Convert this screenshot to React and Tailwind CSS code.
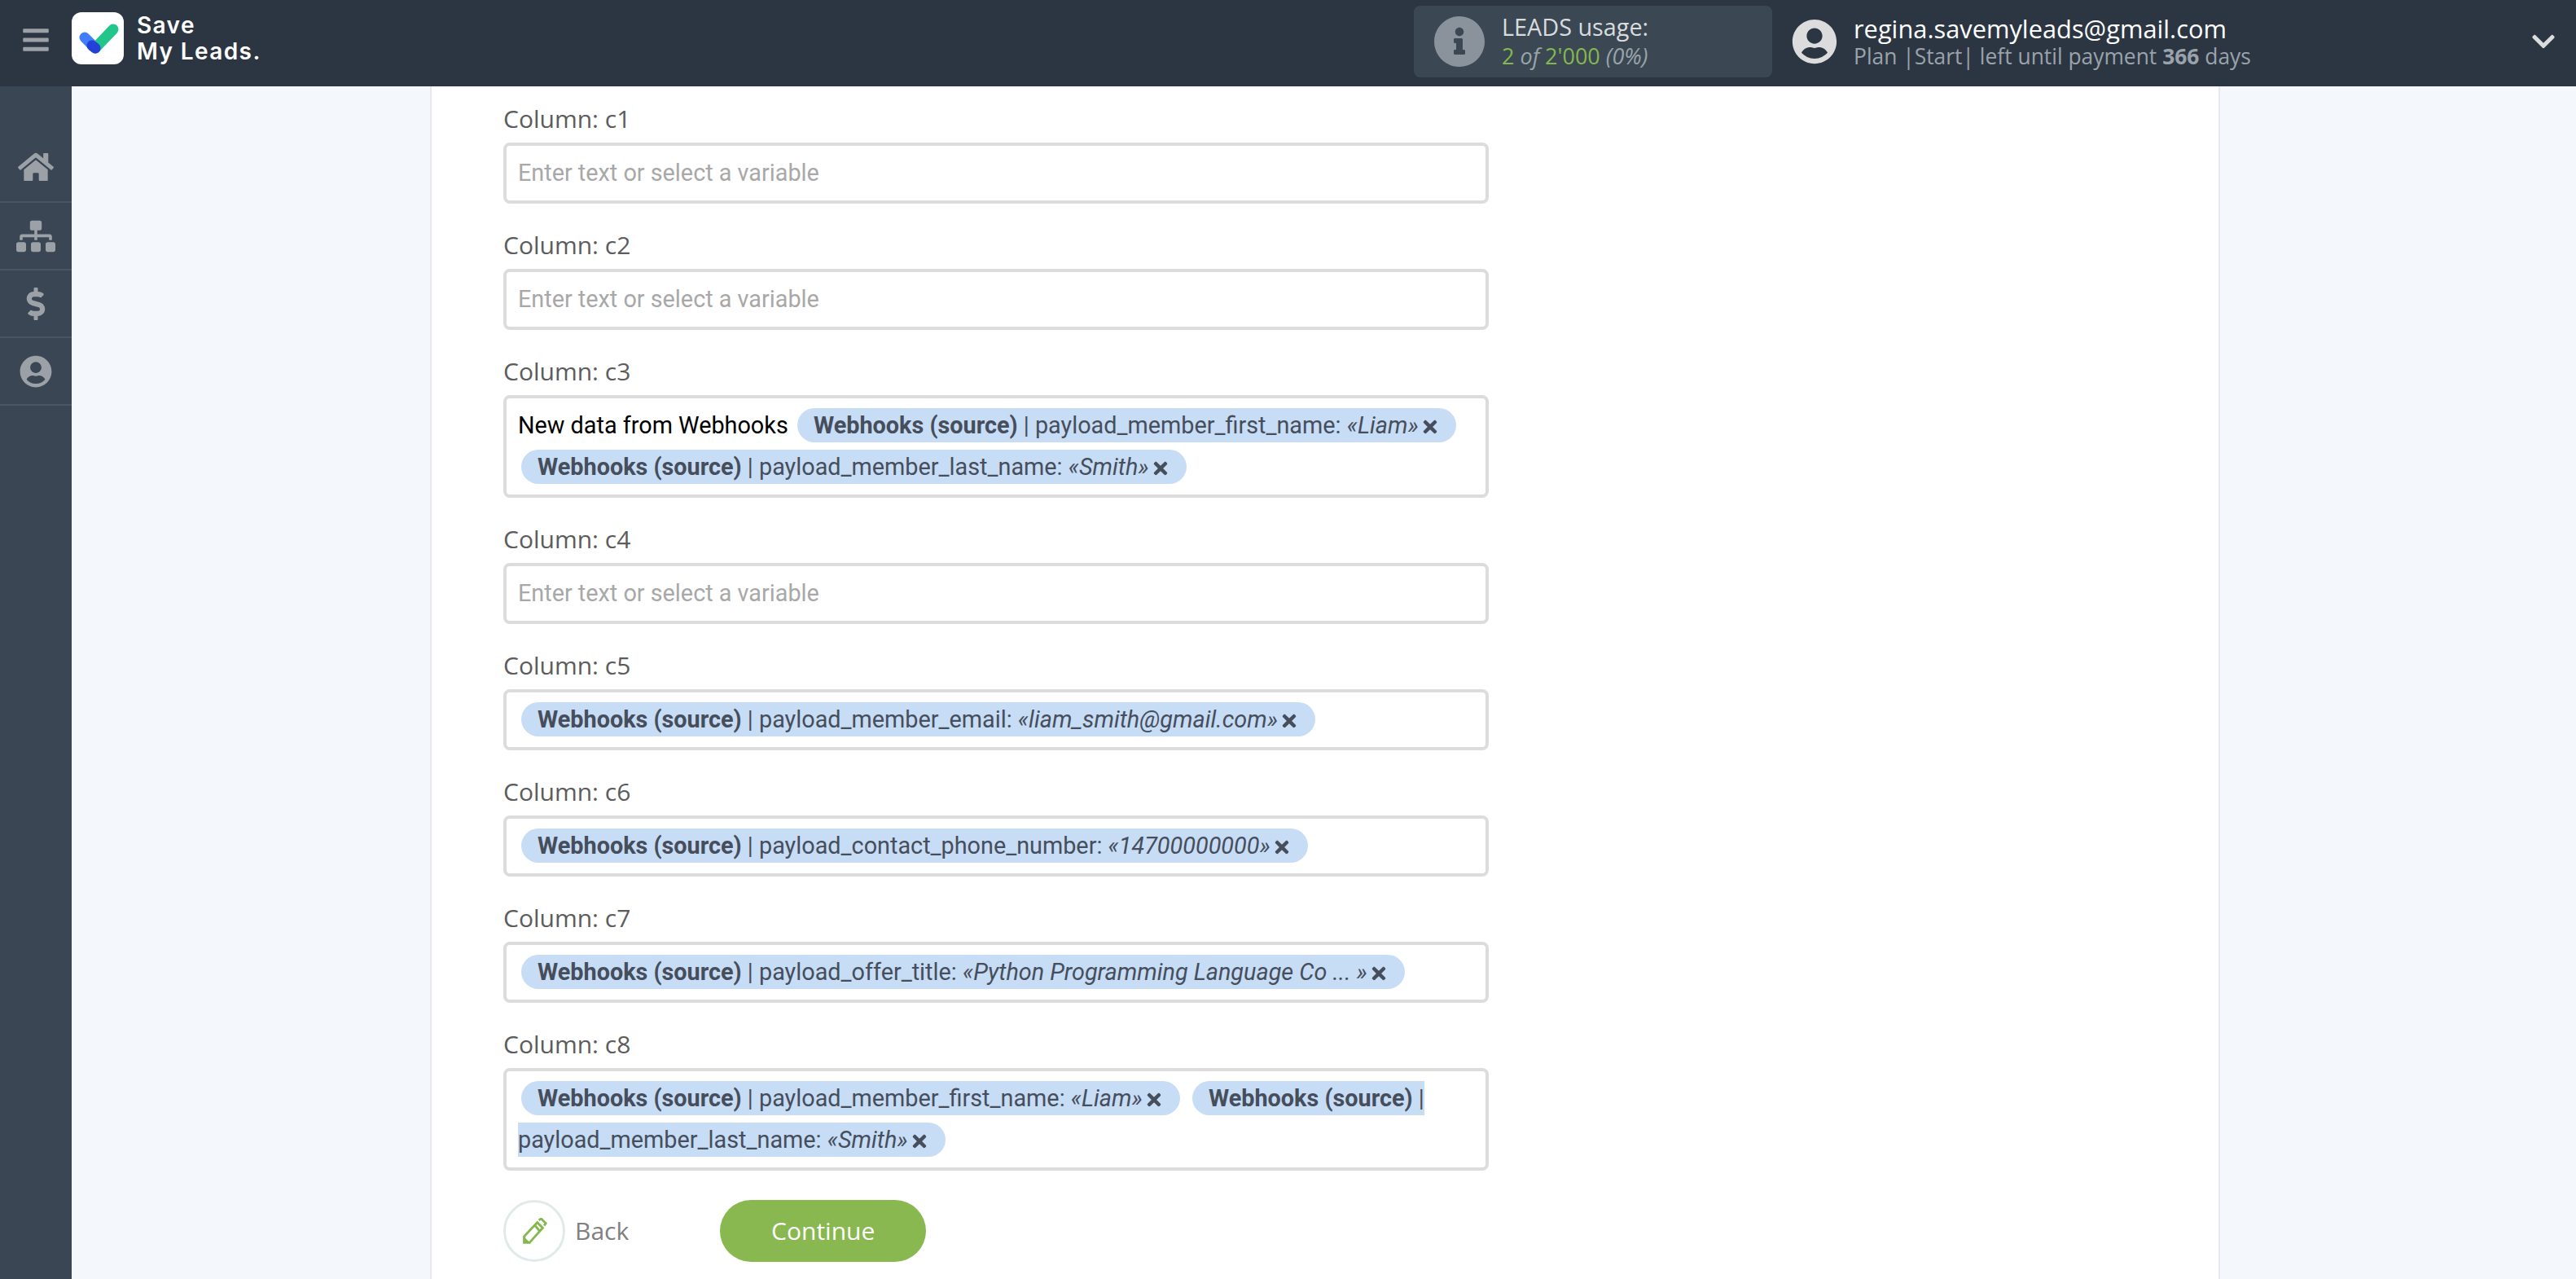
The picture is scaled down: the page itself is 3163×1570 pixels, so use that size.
import { FaBars, FaHome, FaSitemap, FaDollarSign, FaUserCircle, FaInfoCircle, FaChevronDown, FaTimes } from 'react-icons/fa';

function Logo() {
    return (
        <div className="w-16 h-16 mb-3 rounded-xl bg-white">
            <svg viewBox="0 0 64 64" className="w-16 h-16">
                <path d="M16 31 L29 44" stroke="#3f7dfb" strokeWidth="13" strokeLinecap="round" fill="none" />
                <path d="M29 44 L51 21" stroke="#22c58b" strokeWidth="13" strokeLinecap="round" fill="none" />
                <path d="M25 41 L29 44" stroke="#2340d8" strokeWidth="13" strokeLinecap="round" fill="none" />
            </svg>
        </div>
    );
}

function PencilIcon() {
    return (
        <svg viewBox="0 0 32 34" className="w-8 h-8" fill="none" stroke="#84b84f" strokeWidth="3">
            <path d="M3 32 L3 24 L20 6 L27 13 L10 32 Z" />
            <path d="M3 32 L3 27 L8 32 Z" fill="#84b84f" />
            <path d="M22 3 L25 1 L31 7 L29 10" />
            <path d="M17 10 L23 17" />
        </svg>
    );
}

function Tag({ source, field, value }) {
    return (
        <>
            <span className="mx-1 py-1 px-5 rounded-full bg-[#c7dcf5] text-[#464e5c]">
                <b>{source}</b> | {field}: <i>«{value}»</i>
                <FaTimes className="inline-block ml-0.5 w-6 h-6 align-middle" />
            </span>{' '}
        </>
    );
}

function Field({ name, placeholder, children }) {
    return (
        <div className="flex flex-col mb-8">
            <label className="h-10 mb-2 pb-0.5 flex items-center text-3xl text-[#5c5c5c] font-['Open_Sans',sans-serif]">Column: {name}</label>
            <div className="w-[1210px] border-4 border-[#dcdcdc] rounded-lg bg-white px-3.5 py-2 text-[1.8rem] leading-[51px] text-black font-['Roboto',sans-serif]">
                {children ? children : <span className="text-[#a8a8a8]">{placeholder}</span>}
            </div>
        </div>
    );
}

const placeholder = 'Enter text or select a variable';

export default function App() {
    return (
        <div className="h-screen overflow-hidden flex flex-col bg-[#f4f7fc] font-['Open_Sans',sans-serif]">
            <header className="h-[106px] shrink-0 flex items-center bg-[#2c3643]">
                <div className="w-[88px] mb-2 flex justify-center">
                    <FaBars className="w-9 h-9 text-[#9ba1a7]" />
                </div>
                <Logo />
                <div className="flex-1 ml-4 mb-3 text-[28px] leading-8 font-semibold text-white tracking-wider font-['Inter',sans-serif]">
                    <div>Save</div>
                    <div>My Leads.</div>
                </div>
                <div className="w-[440px] h-[88px] mb-1 rounded-lg bg-[#3b4853] flex items-center px-6 gap-5">
                    <FaInfoCircle className="w-16 h-16 text-[#8a939b]" />
                    <div>
                        <div className="text-[1.8rem] leading-9 text-[#d8dcdf]">LEADS usage:</div>
                        <div className="text-[27px] leading-9 italic text-[#9aa3ab]">
                            <span className="text-[#84b84f] not-italic">2</span> of <span className="text-[#84b84f] not-italic">2'000</span> (0%)
                        </div>
                    </div>
                </div>
                <FaUserCircle className="ml-6 mb-1 w-14 h-14 text-[#dcdcdc]" />
                <div className="ml-5 mb-1 w-[831px]">
                    <div className="text-[30.8px] leading-9 text-white">regina.savemyleads@gmail.com</div>
                    <div className="text-[26.4px] leading-8 text-[#9aa3ab]">Plan |Start| left until payment <b>366</b> days</div>
                </div>
                <FaChevronDown className="w-8 h-8 mr-6 mb-1 text-[#dcdcdc]" />
            </header>
            <div className="flex-1 flex min-h-0">
                <aside className="w-[88px] shrink-0 pt-15 bg-[#3a4653] text-[#9ba1a7]">
                    <div className="h-[83px] flex items-center justify-center border-b-2 border-[#4a5562]"><FaHome className="w-11 h-11 mb-1" /></div>
                    <div className="h-[83px] flex items-center justify-center border-b-2 border-[#4a5562]"><FaSitemap className="w-12 h-12" /></div>
                    <div className="h-[83px] flex items-center justify-center border-b-2 border-[#4a5562]"><FaDollarSign className="w-10 h-10" /></div>
                    <div className="h-[83px] flex items-center justify-center border-b-2 border-[#4a5562]"><FaUserCircle className="w-10 h-10" /></div>
                </aside>
                <main className="flex-1 min-w-0">
                    <div className="ml-110 w-[2198px] h-full bg-white border-x-2 border-[#e6eaee] pt-[21px] pl-22">
                        <Field name="c1" placeholder={placeholder} />
                        <Field name="c2" placeholder={placeholder} />
                        <Field name="c3">
                            New data from Webhooks <Tag source="Webhooks (source)" field="payload_member_first_name" value="Liam" />
                            <Tag source="Webhooks (source)" field="payload_member_last_name" value="Smith" />
                        </Field>
                        <Field name="c4" placeholder={placeholder} />
                        <Field name="c5">
                            <Tag source="Webhooks (source)" field="payload_member_email" value="liam_smith@gmail.com" />
                        </Field>
                        <Field name="c6">
                            <Tag source="Webhooks (source)" field="payload_contact_phone_number" value="14700000000" />
                        </Field>
                        <Field name="c7">
                            <Tag source="Webhooks (source)" field="payload_offer_title" value="Python Programming Language Co ... " />
                        </Field>
                        <Field name="c8">
                            <Tag source="Webhooks (source)" field="payload_member_first_name" value="Liam" />
                            <Tag source="Webhooks (source)" field="payload_member_last_name" value="Smith" />
                        </Field>
                        <div className="flex items-center pt-1">
                            <div className="w-[76px] h-[76px] rounded-full border-3 border-[#e1eaea] flex items-center justify-center">
                                <PencilIcon />
                            </div>
                            <span className="ml-3 text-3xl text-[#808080]">Back</span>
                            <button className="ml-28 w-[253px] h-[76px] rounded-full bg-[#88b84f] text-3xl text-white">Continue</button>
                        </div>
                    </div>
                </main>
            </div>
        </div>
    );
}
